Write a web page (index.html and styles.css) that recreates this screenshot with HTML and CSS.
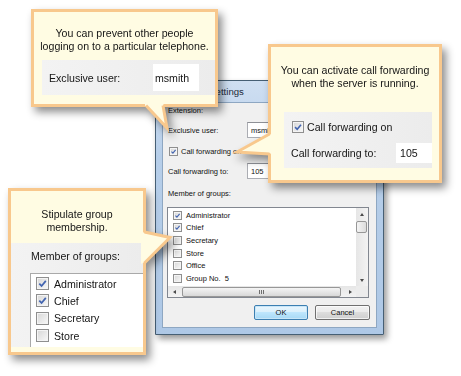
FILE: index.html
```html
<!DOCTYPE html>
<html>
<head>
<meta charset="utf-8">
<link rel="stylesheet" href="styles.css">
</head>
<body>
<div class="dialog">
  <div class="titlebar"><span>Extension settings</span></div>
  <div class="client">
    <div class="d-row r-ext">Extension:</div>
    <div class="d-row r-user"><span class="d-lbl">Exclusive user:</span><span class="d-input">msmith</span></div>
    <div class="d-row r-fwd"><span class="cb sm on"><svg viewBox="0 0 12 12"><path d="M2.5 6.2 5 8.7 9.6 3.2"/></svg></span><span>Call forwarding on</span></div>
    <div class="d-row r-to"><span class="d-lbl">Call forwarding to:</span><span class="d-input">105</span></div>
    <div class="d-row r-mem">Member of groups:</div>
    <div class="listbox">
      <div class="items">
        <div class="item"><span class="cb sm on"><svg viewBox="0 0 12 12"><path d="M2.5 6.2 5 8.7 9.6 3.2"/></svg></span>Administrator</div>
        <div class="item"><span class="cb sm on"><svg viewBox="0 0 12 12"><path d="M2.5 6.2 5 8.7 9.6 3.2"/></svg></span>Chief</div>
        <div class="item"><span class="cb sm"></span>Secretary</div>
        <div class="item"><span class="cb sm"></span>Store</div>
        <div class="item"><span class="cb sm"></span>Office</div>
        <div class="item"><span class="cb sm"></span>Group No.&nbsp; 5</div>
      </div>
      <div class="vscroll">
        <div class="arr"><i class="tri up"></i></div>
        <div class="vthumb"></div>
        <div class="track"></div>
        <div class="arr"><i class="tri down"></i></div>
      </div>
      <div class="hscroll">
        <div class="arr"><i class="tri left"></i></div>
        <div class="hthumb"><span class="grip"></span></div>
        <div class="arr"><i class="tri right"></i></div>
      </div>
      <div class="corner"></div>
    </div>
    <div class="buttons">
      <div class="btn default">OK</div>
      <div class="btn">Cancel</div>
    </div>
  </div>
</div>

<div class="callout c1">
  <div class="box">
    <div class="ctext">You can prevent other people<br>logging on to a particular telephone.</div>
    <div class="panel p1">
      <span class="p-lbl l1">Exclusive user:</span><span class="p-input i1">msmith</span>
    </div>
  </div>
  <svg class="ptr" width="1" height="1"><polygon class="fill" points="114,92 114,96.5 136,119 132,96.5 134,92"/><polyline class="edge" points="115,96.5 136,119 132,96.5"/></svg>
</div>

<div class="callout c2">
  <div class="box">
    <div class="ctext">You can activate call forwarding<br>when the server is running.</div>
    <div class="panel p2">
      <div class="p2-row1"><span class="cb lg on"><svg viewBox="0 0 12 12"><path d="M2.5 6.2 5 8.7 9.6 3.2"/></svg></span><span>Call forwarding on</span></div>
      <div class="p2-row2"><span class="p-lbl l2">Call forwarding to:</span><span class="p-input i2">105</span></div>
    </div>
  </div>
  <svg class="ptr" width="1" height="1"><polygon class="fill" points="5,89 1.5,91 -31,108 1.5,109 5,111"/><polyline class="edge" points="1.5,90 -31,108 1.5,110"/></svg>
</div>

<div class="callout c3">
  <div class="box">
    <div class="ctext">Stipulate group<br>membership.</div>
    <div class="panel p3">
      <div class="p3-lbl">Member of groups:</div>
      <div class="biglist">
        <div class="bitem"><span class="cb lg on"><svg viewBox="0 0 12 12"><path d="M2.5 6.2 5 8.7 9.6 3.2"/></svg></span>Administrator</div>
        <div class="bitem"><span class="cb lg on"><svg viewBox="0 0 12 12"><path d="M2.5 6.2 5 8.7 9.6 3.2"/></svg></span>Chief</div>
        <div class="bitem"><span class="cb lg"></span>Secretary</div>
        <div class="bitem"><span class="cb lg"></span>Store</div>
      </div>
    </div>
  </div>
  <svg class="ptr" width="1" height="1"><polygon class="fill" points="133,43 136.5,45 162,49.5 136.5,74 133,76"/><polyline class="edge" points="136.5,44 162,49.5 136.5,75"/></svg>
</div>
</body>
</html>
```

FILE: styles.css
```css
* { box-sizing: border-box; }
html, body { margin: 0; padding: 0; }
body {
  width: 461px;
  height: 376px;
  position: relative;
  overflow: hidden;
  background: #ffffff;
  font-family: "Liberation Sans", Arial, sans-serif;
  color: #1a1a1a;
}

/* ---------- dialog ---------- */
.dialog {
  position: absolute;
  left: 155px;
  top: 80px;
  width: 229px;
  height: 255px;
  border: 1px solid #465f74;
  border-radius: 5px 5px 0 0;
  background: linear-gradient(#cfdff2, #b6cee9 30%, #aec8e6);
  padding: 0 6px 6px;
  display: flex;
  flex-direction: column;
  box-shadow: 3px 4px 6px rgba(0,0,0,.4);
  font-size: 7.5px;
  color: #111;
}
.titlebar {
  height: 21px;
  display: flex;
  align-items: center;
  padding-left: 4px;
  font-size: 9.6px;
  color: #1c2a3a;
}
.client {
  flex: 1;
  background: #f0f0f0;
  border: 1px solid #8ea7c2;
  padding: 0 7px 0 5px;
  display: flex;
  flex-direction: column;
}
.d-row { display: flex; align-items: center; }
.r-ext { height: 14px; }
.r-user { height: 26px; }
.r-fwd { height: 16px; gap: 3px; padding-left: 1px; }
.r-to { height: 24px; }
.r-mem { height: 20px; }
.d-lbl { width: 79px; flex: none; }
.d-input {
  width: 50px;
  height: 16px;
  background: #fff;
  border: 1px solid #abadb3;
  border-top-color: #8e9096;
  padding-left: 3px;
  display: flex;
  align-items: center;
}

.listbox {
  margin-top: 4px;
  margin-left: -1px;
  height: 91px;
  background: #fff;
  border: 1px solid #828790;
  display: grid;
  grid-template-columns: 1fr 12px;
  grid-template-rows: 1fr 11px;
}
.items { padding-top: 1px; overflow: hidden; }
.item {
  height: 12.6px;
  display: flex;
  align-items: center;
  gap: 4px;
  padding-left: 5px;
}
.vscroll {
  display: flex;
  flex-direction: column;
  background: linear-gradient(90deg, #e6e6e6, #f3f3f3);
}
.hscroll {
  display: flex;
  align-items: center;
  background: linear-gradient(#e6e6e6, #f3f3f3);
}
.corner { background: #ececec; }
.arr {
  width: 12px;
  height: 12px;
  flex: none;
  display: flex;
  align-items: center;
  justify-content: center;
}
.hscroll .arr { height: 11px; }
.vthumb {
  height: 12px;
  margin: 1px 1px 0 0;
  border: 1px solid #979797;
  border-radius: 2px;
  background: linear-gradient(90deg, #f4f4f4, #dcdcdc);
}
.track { flex: 1; }
.hthumb {
  flex: 1;
  height: 10px;
  margin: 0 3px 0 2px;
  border: 1px solid #979797;
  border-radius: 2px;
  background: linear-gradient(#f4f4f4, #d8d8d8);
  display: flex;
  align-items: center;
  justify-content: center;
}
.grip {
  width: 5px;
  height: 4px;
  background: repeating-linear-gradient(90deg, #6f6f6f 0 1px, transparent 1px 2px);
}
.tri { width: 0; height: 0; display: block; }
.tri.up { border-left: 2.5px solid transparent; border-right: 2.5px solid transparent; border-bottom: 3px solid #4a4a4a; }
.tri.down { border-left: 2.5px solid transparent; border-right: 2.5px solid transparent; border-top: 3px solid #4a4a4a; }
.tri.left { border-top: 2.5px solid transparent; border-bottom: 2.5px solid transparent; border-right: 3px solid #4a4a4a; }
.tri.right { border-top: 2.5px solid transparent; border-bottom: 2.5px solid transparent; border-left: 3px solid #4a4a4a; }

.buttons {
  margin-top: 7px;
  display: flex;
  justify-content: flex-end;
  gap: 7px;
  margin-right: -1px;
}
.btn {
  width: 55px;
  height: 15px;
  border: 1px solid #707070;
  border-radius: 2px;
  background: linear-gradient(#f2f2f2, #ebebeb 50%, #dddddd 50%, #cfcfcf);
  box-shadow: inset 0 0 0 1px rgba(255,255,255,.7);
  display: flex;
  align-items: center;
  justify-content: center;
  font-size: 7.5px;
}
.btn.default {
  width: 54px;
  border-color: #3c7fb1;
  background: linear-gradient(#eaf6fd, #d9f0fc 50%, #bee6fd 50%, #a7d9f5);
  box-shadow: inset 0 0 0 1px #c8e6f8;
}

/* ---------- checkboxes ---------- */
.cb {
  display: inline-block;
  position: relative;
  flex: none;
  border: 1px solid #8f8f8f;
  background: linear-gradient(135deg, #d6d6d6, #f9f9f9);
  box-shadow: inset 0 0 0 1px #f4f4f4;
}
.cb svg {
  position: absolute;
  left: 0; top: 0;
  width: 100%;
  height: 100%;
  fill: none;
  stroke: #4264b0;
  stroke-width: 1.9;
}
.cb.sm { width: 9px; height: 9px; }
.cb.lg { width: 12px; height: 12px; }

/* ---------- callouts ---------- */
.callout {
  position: absolute;
  filter: drop-shadow(4px 5px 4px rgba(0,0,0,.45));
  font-size: 10.6px;
  color: #151515;
}
.callout .box {
  width: 100%;
  height: 100%;
  background: #fffce3;
  border: 3px solid #f8c88d;
  display: flex;
  flex-direction: column;
}
.ptr { position: absolute; left: 0; top: 0; overflow: visible; }
.ptr .fill { fill: #fffce3; }
.ptr .edge { fill: none; stroke: #f8c88d; stroke-width: 3; stroke-linejoin: miter; }
.ctext {
  text-align: center;
  line-height: 13px;
}
.panel { background: linear-gradient(90deg, #f3f3f3, #ececec); }
.p-input {
  background: #fff;
  display: flex;
  align-items: center;
}

.c1 { left: 31px; top: 9px; width: 187px; height: 98px; }
.c1 .ctext { margin-top: 14.5px; }
.p1 {
  margin-top: 7.5px;
  margin-left: 8px;
  height: 35px;
  display: flex;
  align-items: center;
  padding-left: 7px;
}
.l1 { width: 104px; flex: none; }
.i1 { width: 46px; height: 27px; padding-left: 2px; }

.c2 { left: 268px; top: 44px; width: 174px; height: 139px; }
.c2 .ctext { margin-top: 16.5px; }
.p2 {
  margin: 22.5px 7px 0 13px;
  height: 56px;
  padding-top: 8px;
  display: flex;
  flex-direction: column;
}
.p2-row1 { height: 14px; display: flex; align-items: center; gap: 3px; padding-left: 8px; }
.p2-row2 { height: 20px; margin-top: 9px; display: flex; align-items: center; padding-left: 7px; }
.l2 { width: 105px; flex: none; }
.i2 { flex: 1; height: 20px; padding-left: 4px; }

.c3 { left: 8px; top: 188px; width: 138px; height: 167px; }
.c3 .ctext { margin-top: 16.5px; }
.p3 {
  margin-top: 9.5px;
  height: 104px;
  padding-left: 20px;
  display: flex;
  flex-direction: column;
}
.p3-lbl { padding-top: 6px; line-height: 14px; }
.biglist {
  flex: 1;
  margin-top: 10px;
  margin-left: -1px;
  background: #fff;
  border-top: 1px solid #a9a9a9;
  border-left: 1px solid #a9a9a9;
  padding-top: 1px;
  overflow: hidden;
}
.bitem {
  height: 17.3px;
  display: flex;
  align-items: center;
  gap: 5px;
  padding-left: 5px;
}
.bitem .cb { width: 13px; height: 13px; }
```
